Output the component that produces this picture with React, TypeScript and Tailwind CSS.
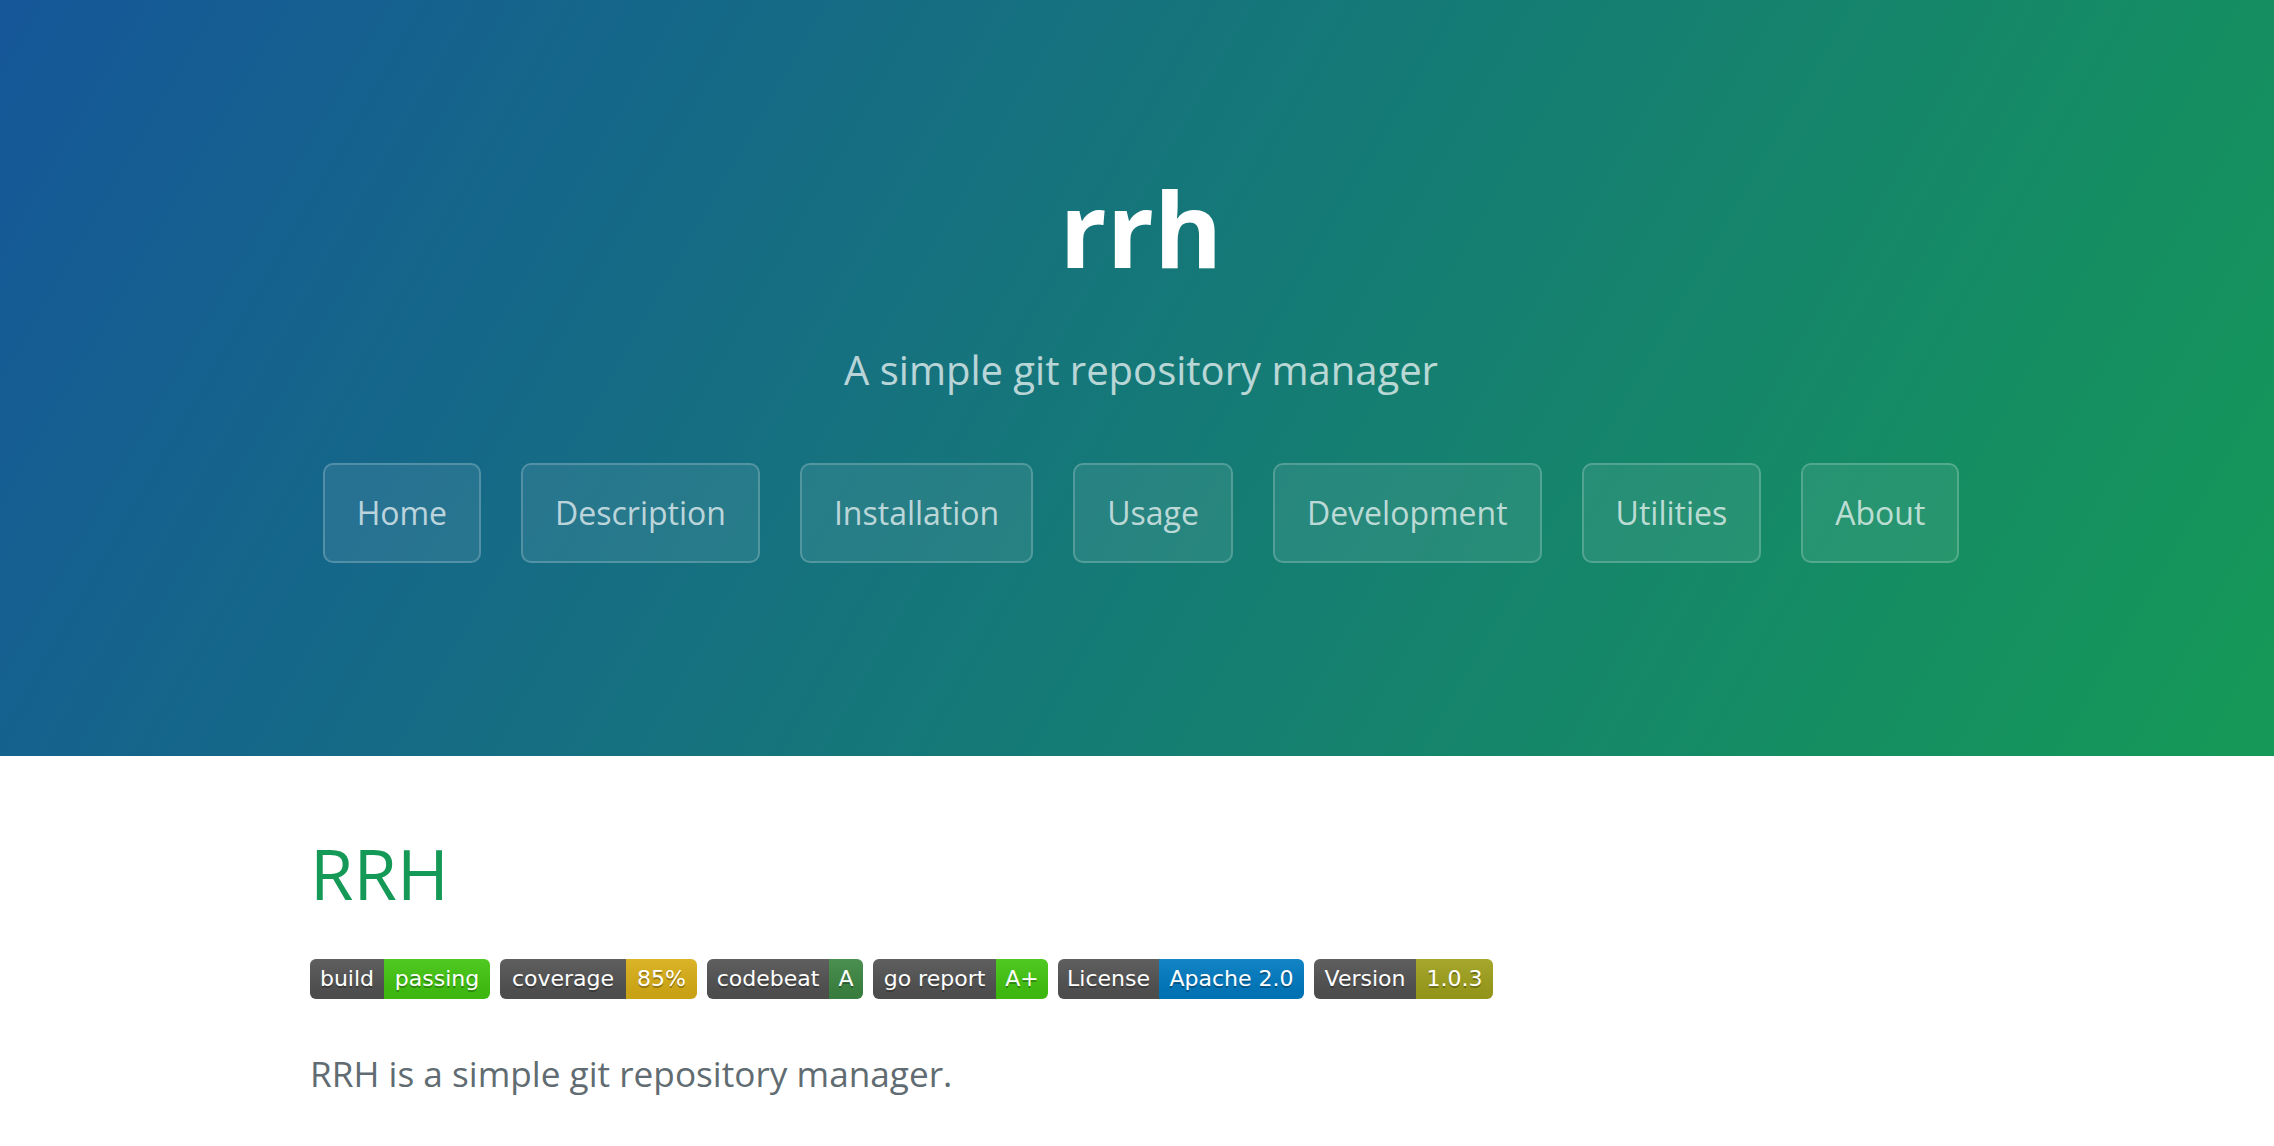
import React from 'react';

const navLinks = ['Home', 'Description', 'Installation', 'Usage', 'Development', 'Utilities', 'About'];

type Badge = {
  label: string;
  value: string;
  labelWidth: string;
  valueWidth: string;
  color: string;
};

const badges: Badge[] = [
  { label: 'build', value: 'passing', labelWidth: 'w-[74px]', valueWidth: 'w-[106px]', color: 'bg-[#4c1]' },
  { label: 'coverage', value: '85%', labelWidth: 'w-[126px]', valueWidth: 'w-[71px]', color: 'bg-[#dfb317]' },
  { label: 'codebeat', value: 'A', labelWidth: 'w-[122px]', valueWidth: 'w-[34px]', color: 'bg-[#3f8b45]' },
  { label: 'go report', value: 'A+', labelWidth: 'w-[123px]', valueWidth: 'w-[52px]', color: 'bg-[#4c1]' },
  { label: 'License', value: 'Apache 2.0', labelWidth: 'w-[101px]', valueWidth: 'w-[145px]', color: 'bg-[#007ec6]' },
  { label: 'Version', value: '1.0.3', labelWidth: 'w-[102px]', valueWidth: 'w-[77px]', color: 'bg-[#a4a61d]' },
];

function ShieldBadge({ badge }: { badge: Badge }) {
  const seg =
    "flex h-full items-center justify-center bg-linear-to-b from-[#bbbbbb1a] to-[#0000001a] text-white text-[22px] [font-family:'DejaVu_Sans',Verdana,sans-serif] [text-shadow:0_2px_0_rgba(1,1,1,0.3)]";
  return (
    <div className="flex h-[40px] overflow-hidden rounded-[6px]">
      <span className={`${seg} ${badge.labelWidth} bg-[#555]`}>{badge.label}</span>
      <span className={`${seg} ${badge.valueWidth} ${badge.color}`}>{badge.value}</span>
    </div>
  );
}

export default function App() {
  return (
    <div className="min-h-screen bg-white [font-family:'Open_Sans','Helvetica_Neue',Helvetica,Arial,sans-serif]">
      <header className="flex flex-col items-center bg-[linear-gradient(120deg,#155799,#159957)] pt-[150px] pb-[193px] pl-[8px] text-center text-white">
        <h1 className="text-[104px] font-bold leading-[156px]">rrh</h1>
        <h2 className="mt-[34px] text-[40px] font-normal leading-[60px] opacity-70">A simple git repository manager</h2>
        <nav className="mt-[63px] flex justify-center gap-[40px]">
          {navLinks.map((link) => (
            <a
              key={link}
              href="#"
              className="rounded-[10px] border-2 border-white/20 bg-white/[0.08] px-[32px] py-[24px] text-[32px] leading-[48px] text-white/70"
            >
              {link}
            </a>
          ))}
        </nav>
      </header>

      <main className="mx-auto max-w-[2048px] pl-[197px] pr-[192px] pt-[65px] pb-[64px]">
        <h1 className="text-[70.4px] font-normal leading-[1.5] text-[#159957]">RRH</h1>
        <div className="mt-[32px] flex gap-[10px]">
          {badges.map((b) => (
            <ShieldBadge key={b.label} badge={b} />
          ))}
        </div>
        <p className="mt-[48px] text-[35.2px] leading-[1.5] text-[#606c71]">RRH is a simple git repository manager.</p>
      </main>
    </div>
  );
}
